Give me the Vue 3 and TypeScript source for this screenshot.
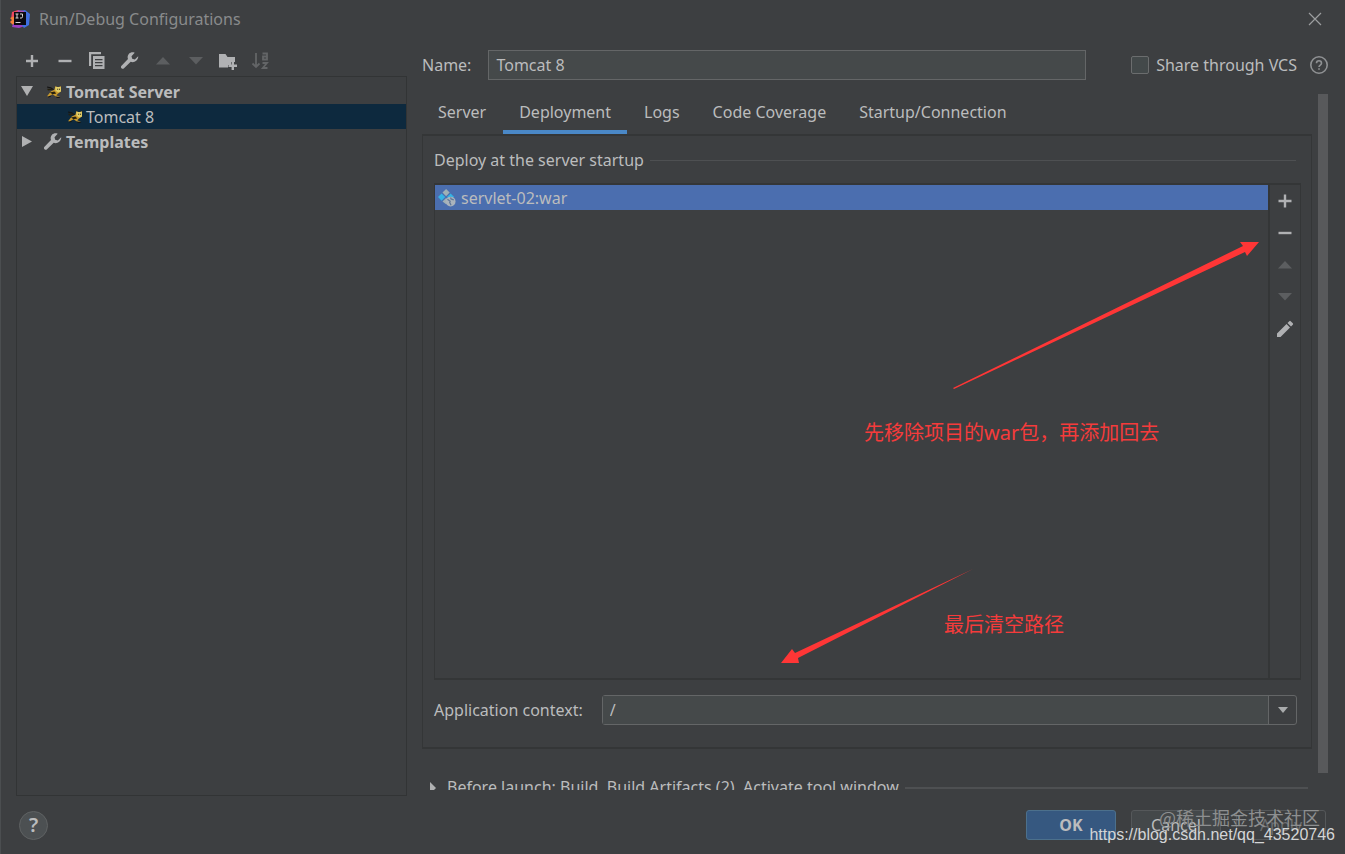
<script setup lang="ts">
import { ref } from 'vue'

const name = ref('Tomcat 8')
const context = ref('/')
const shared = ref(false)
const tabs = ['Server', 'Deployment', 'Logs', 'Code Coverage', 'Startup/Connection']
const active = ref('Deployment')
</script>

<template>
  <main class="dialog">
    <header class="titlebar">
      <svg class="logo" viewBox="0 0 20 20" width="20" height="20" aria-hidden="true">
        <path d="M2 3 8 1l4 4-5 8-6-3z" fill="#f0465f" />
        <path d="M0 9l5-2 3 8-5 1-3-3 2-2z" fill="#f4803a" />
        <path d="M3 15l8-2 4 4-6 2-7-1z" fill="#9a3fc4" />
        <path d="M10 2l5-1 5 4-1 11-5 3-4-5z" fill="#3f6fe0" />
        <path d="M8 1l6 1 1 4H7z" fill="#a94fb8" />
        <path d="M4 3h12v13H4z" fill="#0b0910" />
        <path d="M5.500 5h3M7 5v4M5.500 9h3M10 5h2.500v2.700q0 1.300-1.300 1.300H10M5.500 13.500h5" stroke="#d8d8d8" stroke-width="1" fill="none" />
      </svg>
      <h1>Run/Debug Configurations</h1>
      <button class="icon close" aria-label="Close">
        <svg viewBox="0 0 14 14" width="14" height="14"><path d="M1 1l12 12M13 1 1 13" stroke="#9c9e9f" stroke-width="1.200" /></svg>
      </button>
    </header>

    <div class="body">
      <aside class="sidebar">
        <div class="toolbar">
          <button class="icon" aria-label="Add"><svg viewBox="0 0 20 20"><path d="M10 4v12M4 10h12" class="bold" /></svg></button>
          <button class="icon" aria-label="Remove"><svg viewBox="0 0 20 20"><path d="M3.500 10h13" class="bold" /></svg></button>
          <button class="icon" aria-label="Copy">
            <svg viewBox="0 0 20 20"><path d="M2 1h12v2.200H4.200V15H2z" class="fill" /><path d="M6 5h11.500v13H6zM8 8v1.300h7.500V8zM8 11v1.300h7.500V11zM8 14v1.300h7.500V14z" class="fill" fill-rule="evenodd" /></svg>
          </button>
          <button class="icon" aria-label="Edit templates">
            <svg viewBox="0 0 20 20"><path d="M18.200 5.200 14.800 8.500l-2.600-.7-.7-2.600 3.200-3.400c-2-.9-4.300-.4-5.700 1-1.400 1.500-1.700 3.600-1 5.300L1.500 14.800c-.7.700-.7 1.800 0 2.500s1.800.7 2.500 0l6.700-6.500c1.900.8 4 .4 5.500-1s2.100-3 2-4.600z" class="fill" /></svg>
          </button>
          <button class="icon" disabled aria-label="Move up"><svg viewBox="0 0 20 20"><path d="M10 6l7 7.500H3z" class="dim" /></svg></button>
          <button class="icon" disabled aria-label="Move down"><svg viewBox="0 0 20 20"><path d="M3 6h14l-7 7.500z" class="dim" /></svg></button>
          <button class="icon" aria-label="New folder">
            <svg viewBox="0 0 20 20"><path d="M1 3h6.500l2 3H17v5h-4v3h-3v2.500H1z" class="fill" /><path d="M14.800 10.500v8.500M10.500 14.800h8.500" class="bold" /></svg>
          </button>
          <button class="icon" disabled aria-label="Sort alphabetically">
            <svg viewBox="0 0 20 20"><path d="M5 2v14M1.500 12.500 5 16l3.500-3.500M11.500 2.500H16v6h-4V5.500h4M11.500 12H16l-4.200 5h4.700" class="sort" /></svg>
          </button>
        </div>
        <ul class="tree">
          <li class="group">
            <svg class="twisty" viewBox="0 0 12 12"><path d="M0 0h12L6 10z" fill="#b0b1b2" /></svg>
            <svg class="cat" viewBox="0 0 17 13"><path d="M1 1l4 1 3 2M2 12l3-1M11 12l4 1" stroke="#151515" stroke-width="1.200" fill="none" /><path d="M1 11l4-5 4-2 1-4 2 1 2 0 2-1v6l-3 2-2 2 4 2-5-1-3-2-4 2z" fill="#c99a2c" /><path d="M10 1h6v5l-3 1-3-2z" fill="#e0cd68" /><path d="M4 7l5-1 2 2-4 1zM12 3h1v1h-1zM14 3h1v1h-1zM1 3l5 0 1 1-5 1z" fill="#25200f" /></svg>
            <strong>Tomcat Server</strong>
          </li>
          <li class="child selected">
            <svg class="cat" viewBox="0 0 17 13"><path d="M1 1l4 1 3 2M2 12l3-1M11 12l4 1" stroke="#151515" stroke-width="1.200" fill="none" /><path d="M1 11l4-5 4-2 1-4 2 1 2 0 2-1v6l-3 2-2 2 4 2-5-1-3-2-4 2z" fill="#c99a2c" /><path d="M10 1h6v5l-3 1-3-2z" fill="#e0cd68" /><path d="M4 7l5-1 2 2-4 1zM12 3h1v1h-1zM14 3h1v1h-1zM1 3l5 0 1 1-5 1z" fill="#25200f" /></svg>
            <span>Tomcat 8</span>
          </li>
          <li class="group">
            <svg class="twisty" viewBox="0 0 12 12"><path d="M1 0v11l10-5.500z" fill="#b0b1b2" /></svg>
            <svg class="wrench" viewBox="0 0 20 20"><path d="M18.200 5.200 14.800 8.500l-2.600-.7-.7-2.600 3.200-3.400c-2-.9-4.300-.4-5.700 1-1.400 1.500-1.700 3.600-1 5.300L1.500 14.800c-.7.700-.7 1.800 0 2.500s1.800.7 2.500 0l6.700-6.500c1.900.8 4 .4 5.500-1s2.100-3 2-4.600z" class="fill" /></svg>
            <strong>Templates</strong>
          </li>
        </ul>
      </aside>

      <section class="editor">
        <div class="namerow">
          <label for="name">Name:</label>
          <input id="name" v-model="name" type="text" />
          <label class="share"><input v-model="shared" type="checkbox" />Share through VCS</label>
          <button class="icon" aria-label="About sharing">
            <svg viewBox="0 0 20 20"><circle cx="10" cy="10" r="8.200" class="ring" /><path d="M7.500 8.200c0-3.300 5-3.300 5 0 0 1.900-2.500 1.800-2.500 3.800M10 13.300v1.500" class="ring" /></svg>
          </button>
        </div>

        <div class="scrollarea">
          <div class="content">
            <nav class="tabs" role="tablist">
              <button v-for="t in tabs" :key="t" role="tab" :aria-selected="t === active" :class="{ active: t === active }" @click="active = t">{{ t }}</button>
            </nav>
            <div class="panel">
              <h2>Deploy at the server startup</h2>
              <div class="deploy">
                <ul class="artifacts">
                  <li>
                    <svg viewBox="0 0 20 20"><path d="M9 0l4 4-4 4-4-4z" fill="#9fb0b5" /><path d="M4 5l4 4-4 4-4-4z" fill="#35b3e4" /><path d="M14 5l4 4-2 1-5 0-1-1z" fill="#35b3e4" /><path d="M9 10l2 2-2 5-4-3z" fill="#9fb0b5" /><circle cx="14" cy="14" r="5.500" fill="#aab3bc" /><path d="M10.500 11.500l3 2-.5 1.500 1.500 3M14 9.500l.5 1.500 3 1" stroke="#5f7699" stroke-width="1.400" fill="none" /></svg>
                    <span>servlet-02:war</span>
                  </li>
                </ul>
                <div class="actions">
                  <button class="icon" aria-label="Add artifact"><svg viewBox="0 0 20 20"><path d="M10 3.500v13M3.500 10h13" class="bold" /></svg></button>
                  <button class="icon" aria-label="Remove artifact"><svg viewBox="0 0 20 20"><path d="M3.500 10h13" class="bold" /></svg></button>
                  <button class="icon" disabled aria-label="Move artifact up"><svg viewBox="0 0 20 20"><path d="M10 6l7 7.500H3z" class="dim" /></svg></button>
                  <button class="icon" disabled aria-label="Move artifact down"><svg viewBox="0 0 20 20"><path d="M3 6h14l-7 7.500z" class="dim" /></svg></button>
                  <button class="icon" aria-label="Edit artifact"><svg viewBox="0 0 20 20"><path d="M2 14.500 11.500 5l3.500 3.500L5.500 18H2zM12.500 4l1.800-1.800q.7-.7 1.400 0l2.100 2.100q.7.700 0 1.400L16 7.500z" class="fill" /></svg></button>
                </div>
              </div>
              <div class="contextrow">
                <label for="context">Application context:</label>
                <div class="combo">
                  <input id="context" v-model="context" type="text" />
                  <button aria-label="Show contexts"><svg viewBox="0 0 12 8" width="12" height="8"><path d="M1 1h10L6 7z" fill="#a9abac" /></svg></button>
                </div>
              </div>
            </div>
            <button class="before">
              <svg viewBox="0 0 8 12" width="8" height="12"><path d="M1 0v12l6-6z" fill="#b0b1b2" /></svg>
              <span>Before launch: Build, Build Artifacts (2), Activate tool window</span>
            </button>
          </div>
          <div class="scrollbar"><div class="thumb"></div></div>
        </div>
      </section>
    </div>

    <footer class="footer">
      <button class="help" aria-label="Help">?</button>
      <button class="btn primary">OK</button>
      <button class="btn">Cancel</button>
      <button class="btn apply" disabled>Apply</button>
    </footer>

    <div class="notes">
      <svg viewBox="0 0 1345 854" width="1345" height="854" aria-hidden="true">
        <path d="M953 388 1243 246 1240 242 1259 242 1247 256 1245 252 954 389z" fill="#ff3636" />
        <path d="M973 569 795 653 792 649 781 663 799 663 798 658z" fill="#ff3636" />
      </svg>
      <p class="note first">先移除项目的war包，再添加回去</p>
      <p class="note second">最后清空路径</p>
      <p class="community">@稀土掘金技术社区</p>
      <p class="source">https://blog.csdn.net/qq_43520746</p>
    </div>
  </main>
</template>

<style>
html,
body {
  background: #3c3f41;
}
</style>

<style scoped>
* {
  box-sizing: border-box;
}
.dialog {
  position: relative;
  display: flex;
  flex-direction: column;
  height: 100vh;
  overflow: hidden;
  background: #3d3f41;
  border-left: 1px solid #4b4e50;
  color: #bbbcbd;
  font: 16px/24px "Noto Sans", "Noto Sans CJK SC", sans-serif;
}
h1,
h2,
p,
ul {
  margin: 0;
  padding: 0;
  font-size: inherit;
  font-weight: 400;
  list-style: none;
}
button,
input {
  margin: 0;
  padding: 0;
  border: 0;
  background: none;
  color: inherit;
  font: inherit;
}
.titlebar {
  display: flex;
  align-items: center;
  gap: 9px;
  height: 38px;
  padding: 0 20px 0 9px;
  color: #898b8c;
}
.close {
  margin-left: auto;
}
.icon {
  display: flex;
  align-items: center;
  justify-content: center;
  width: 20px;
  height: 20px;
  flex: none;
}
.icon svg {
  display: block;
}
.bold {
  stroke: #b0b1b3;
  stroke-width: 2.4;
  fill: none;
}
.fill {
  fill: #b0b1b3;
}
.dim {
  fill: #5c5e60;
}
.sort {
  fill: none;
  stroke: #636567;
  stroke-width: 1.8;
}
.ring {
  fill: none;
  stroke: #8f9193;
  stroke-width: 1.6;
}
.body {
  display: flex;
  flex: 1;
  min-height: 0;
  padding: 0 16px 0 15px;
  gap: 15px;
}
.sidebar {
  display: flex;
  flex-direction: column;
  width: 391px;
  flex: none;
}
.toolbar {
  display: flex;
  align-items: center;
  justify-content: space-between;
  width: 261px;
  height: 38px;
  padding: 8px 6px 0;
}
.tree {
  flex: 1;
  border: 1px solid #323435;
  padding-top: 2px;
}
.tree li {
  display: flex;
  align-items: center;
  height: 25px;
}
.group {
  padding-left: 4px;
}
.group strong {
  font-weight: 700;
}
.child {
  padding-left: 50px;
}
.selected {
  background: #0d293e;
}
.twisty {
  width: 12px;
  height: 12px;
  margin-right: 13px;
}
.cat {
  width: 16px;
  height: 12px;
  margin-right: 4px;
}
.child .cat {
  margin-right: 3px;
}
.wrench {
  width: 20px;
  height: 20px;
  margin: 0 3px 0 -3px;
}
.editor {
  display: flex;
  flex-direction: column;
  flex: 1;
  min-width: 0;
}
.namerow {
  display: flex;
  align-items: center;
  height: 54px;
  margin-bottom: 2px;
}
.namerow > input {
  flex: 1;
  min-width: 0;
  height: 30px;
  margin: 0 45px 0 17px;
  padding: 0 7px;
  background: #45494a;
  border: 1px solid #646667;
}
.share {
  display: flex;
  align-items: center;
  gap: 7px;
  margin-right: 12px;
}
.share input {
  appearance: none;
  width: 18px;
  height: 18px;
  border: 1px solid #6b6d6e;
  border-radius: 2px;
  background: #43494a;
}
.scrollarea {
  display: flex;
  flex: 1;
  min-height: 0;
  margin-bottom: 6px;
  overflow: hidden;
}
.content {
  display: flex;
  flex-direction: column;
  flex: 1;
  min-width: 0;
}
.tabs {
  display: flex;
  flex: none;
  gap: 1px;
  height: 40px;
}
.tabs button {
  padding: 0 16px;
  border-bottom: 4px solid transparent;
}
.tabs .active {
  border-bottom-color: #4a88c7;
}
.panel {
  display: flex;
  flex-direction: column;
  flex: 1;
  min-height: 0;
  padding: 12px 10px 22px 11px;
  border: 2px solid #343637;
  border-width: 2px 1px;
}
h2 {
  display: flex;
  align-items: center;
  gap: 6px;
  margin-right: 5px;
}
h2::after {
  content: "";
  flex: 1;
  height: 1px;
  background: #4e5052;
}
.deploy {
  display: flex;
  flex: 1;
  min-height: 0;
  margin-top: 11px;
  border: 2px solid #343637;
  border-width: 2px 1px;
}
.artifacts {
  flex: 1;
}
.artifacts li {
  display: flex;
  align-items: center;
  gap: 5px;
  height: 25px;
  padding-left: 3px;
  background: #4b6eaf;
}
.artifacts svg {
  width: 18px;
  height: 18px;
}
.actions {
  display: flex;
  flex-direction: column;
  align-items: center;
  gap: 12px;
  width: 32px;
  padding-top: 6px;
  border-left: 2px solid #343637;
}
.contextrow {
  display: flex;
  align-items: center;
  gap: 19px;
  margin: 15px 4px 0 0;
}
.combo {
  display: flex;
  flex: 1;
  height: 30px;
  border: 1px solid #646667;
  border-radius: 3px;
}
.combo input {
  flex: 1;
  min-width: 0;
  padding: 0 7px;
  background: #45494a;
}
.combo button {
  display: flex;
  align-items: center;
  justify-content: center;
  width: 28px;
  border-left: 1px solid #646667;
}
.before {
  display: flex;
  flex: none;
  align-items: flex-start;
  gap: 10px;
  height: 15px;
  margin-top: 26px;
  padding: 0 4px 0 7px;
  overflow: hidden;
}
.before svg {
  margin-top: 7px;
}
.before::after {
  content: "";
  flex: 1;
  height: 2px;
  margin: 12px 0 0 -4px;
  background: #4e5052;
}
.scrollbar {
  width: 17px;
  padding: 0 1px 17px 6px;
}
.thumb {
  height: 100%;
  background: #58595b;
}
.footer {
  display: flex;
  align-items: center;
  gap: 15px;
  height: 58px;
  padding: 0 19px 0 18px;
}
.help {
  width: 29px;
  height: 29px;
  margin-right: auto;
  border: 1px solid #5f6263;
  border-radius: 50%;
  background: #4c5052;
  font-size: 20px;
  font-weight: 600;
}
.btn {
  width: 90px;
  height: 30px;
  border: 1px solid #55585a;
  border-radius: 3px;
  background: #44484a;
}
.primary {
  border-color: #4c708c;
  background: #365880;
  font-weight: 700;
}
.apply {
  color: #6c6e70;
  background: none;
}
.notes {
  position: absolute;
  inset: 0 0 0 -1px;
  pointer-events: none;
}
.notes p {
  position: absolute;
  white-space: nowrap;
}
.note {
  color: #f53b3b;
  font: 20px/28px "Noto Sans", "Noto Sans CJK SC", sans-serif;
}
.first {
  left: 864px;
  top: 419px;
}
.second {
  left: 944px;
  top: 611px;
}
.community {
  right: 25px;
  bottom: 24px;
  color: #8d8f90;
  font: 18px/26px "Noto Sans CJK SC", sans-serif;
}
.source {
  right: 10px;
  bottom: 9px;
  color: #d4d5d6;
  font: 16px/20px "Liberation Sans", sans-serif;
}
</style>
